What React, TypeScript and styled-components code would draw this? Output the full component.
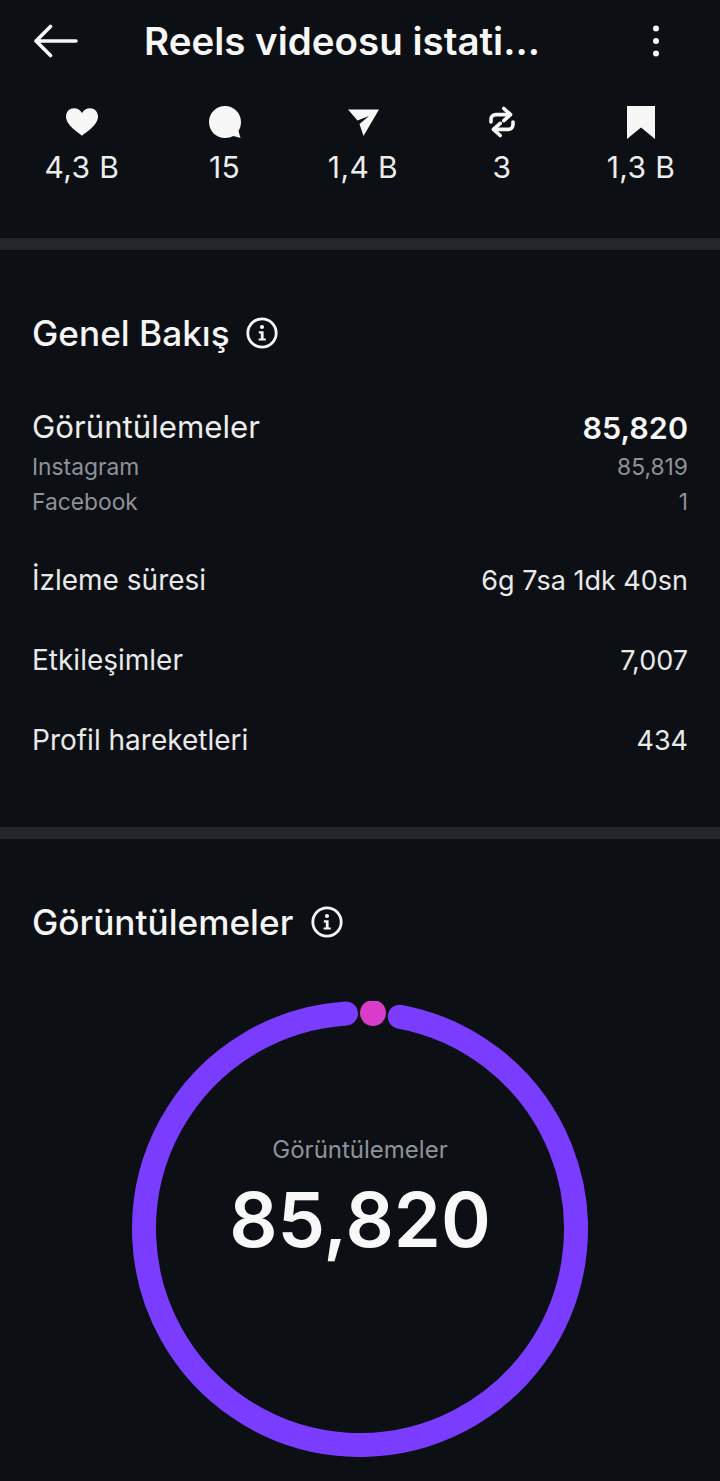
import React from 'react'
import styled, { createGlobalStyle } from 'styled-components'

const GlobalStyle = createGlobalStyle`
  html, body {
    margin: 0;
    padding: 0;
    background: #0c0f14;
  }
  * {
    box-sizing: border-box;
  }
`

const Page = styled.div`
  width: 720px;
  height: 1481px;
  overflow: hidden;
  background: #0c0f14;
  color: #f5f5f5;
  font-family: Inter, 'Noto Sans', sans-serif;
`

const Header = styled.div`
  height: 82px;
  padding: 0 57px 0 33px;
  display: flex;
  align-items: center;
`

const HeaderTitle = styled.div`
  margin-left: 65px;
  font-size: 38.5px;
  line-height: 44px;
  font-weight: 600;
  color: #f7f7f7;
  white-space: nowrap;
`

const HeaderMenu = styled.div`
  margin-left: auto;
  width: 14px;
  display: flex;
  justify-content: center;
`

const StatsRow = styled.div`
  height: 156px;
  padding: 23px 0 0 22px;
  display: grid;
  grid-template-columns: 120px 165px 112px 166px 112px;
`

const Stat = styled.div`
  display: flex;
  flex-direction: column;
  align-items: center;
  gap: 11px;
`

const StatIcon = styled.div`
  height: 34px;
  display: flex;
  align-items: center;
  justify-content: center;
`

const StatValue = styled.div`
  font-size: 30px;
  line-height: 34px;
  letter-spacing: 0.4px;
  color: #ececec;
  white-space: nowrap;
`

const Divider = styled.div`
  height: 12px;
  background: #23262b;
`

const Section = styled.div<{ $height: number }>`
  height: ${(p) => p.$height}px;
  padding: 0 32px;
`

const SectionTitle = styled.div<{ $gap: number }>`
  display: flex;
  align-items: center;
  gap: ${(p) => p.$gap}px;
  padding-top: 61px;
  font-size: 35.2px;
  line-height: 44px;
  font-weight: 550;
  color: #f5f5f5;
`

const Rows = styled.div`
  margin-top: 54px;
`

const MainRow = styled.div<{ $gap?: number }>`
  display: flex;
  justify-content: space-between;
  align-items: center;
  height: 36px;
  margin-top: ${(p) => p.$gap ?? 0}px;
  font-size: 28px;
  color: #e9e9e9;
`

const RowValue = styled.span`
  font-size: 27px;
`

const LeadRow = styled(MainRow)`
  font-size: 31.2px;
  color: #ececec;
`

const StrongValue = styled.span`
  font-weight: 600;
  font-size: 30.5px;
  color: #f5f5f5;
`

const SubRows = styled.div`
  margin-top: 4px;
`

const SubRow = styled.div`
  display: flex;
  justify-content: space-between;
  align-items: center;
  height: 35px;
  font-size: 22.8px;
  color: #8f9299;
`

const RingWrap = styled.div`
  position: relative;
  width: 456px;
  height: 456px;
  margin: 57px auto 0;
`

const RingLabel = styled.div`
  position: absolute;
  top: 134px;
  left: 0;
  right: 0;
  text-align: center;
  font-size: 24px;
  line-height: 30px;
  color: #8f9299;
`

const RingValue = styled.div`
  position: absolute;
  top: 173px;
  left: 0;
  right: 0;
  text-align: center;
  font-size: 75.6px;
  line-height: 92px;
  font-weight: 600;
  color: #f8f8f8;
`

const Icon = styled.svg`
  display: block;
  flex: none;
`

const info = (
  <Icon width="32" height="32" viewBox="0 0 32 32" fill="none">
    <circle cx="16" cy="16" r="14.2" stroke="#f5f5f5" strokeWidth="2.8" />
    <circle cx="16" cy="10" r="2.1" fill="#f5f5f5" />
    <path d="M12.8 14.2H17.6V21.4H19.8V23.6H12.6V21.4H14.8V16.4H12.8Z" fill="#f5f5f5" />
  </Icon>
)

const stats = [
  {
    value: '4,3 B',
    icon: (
      <Icon width="34" height="30" viewBox="0 0 34 30">
        <path d="M17 28.8C14.6 26.4 1 18.8 1 9.6C1 4.6 4.6 1.2 9 1.2C12.4 1.2 15.4 3 17 6C18.6 3 21.6 1.2 25 1.2C29.4 1.2 33 4.6 33 9.6C33 18.8 19.4 26.4 17 28.8Z" fill="#f7f7f7" />
      </Icon>
    ),
  },
  {
    value: '15',
    icon: (
      <Icon width="34" height="34" viewBox="0 0 34 34">
        <path d="M17 1C26 1 33 8 33 17C33 20.5 32 23.5 30.5 26L32.5 33L25.5 31C23 32.3 20 33 17 33C8 33 1 26 1 17C1 8 8 1 17 1Z" fill="#f7f7f7" />
      </Icon>
    ),
  },
  {
    value: '1,4 B',
    icon: (
      <Icon width="31" height="28" viewBox="0 0 31 28">
        <path d="M0 1.5L31 1.5L15.5 28L11.5 16L21 8L9.5 12.5Z" fill="#f7f7f7" />
      </Icon>
    ),
  },
  {
    value: '3',
    icon: (
      <Icon width="28" height="32" viewBox="0 0 28 32" fill="none">
        <path d="M3 16V13.5C3 10.5 5.2 8.6 8 8.6H21" stroke="#f7f7f7" strokeWidth="3.6" strokeLinecap="round" />
        <path d="M15.8 2.5L22.6 8.6L15.8 14.7" stroke="#f7f7f7" strokeWidth="3.6" strokeLinecap="round" strokeLinejoin="round" />
        <path d="M25 16V18.5C25 21.5 22.8 23.4 20 23.4H7" stroke="#f7f7f7" strokeWidth="3.6" strokeLinecap="round" />
        <path d="M12.2 17.3L5.4 23.4L12.2 29.5" stroke="#f7f7f7" strokeWidth="3.6" strokeLinecap="round" strokeLinejoin="round" />
      </Icon>
    ),
  },
  {
    value: '1,3 B',
    icon: (
      <Icon width="28" height="33" viewBox="0 0 28 33">
        <path d="M0 0H28V33L14 21.5L0 33Z" fill="#f7f7f7" />
      </Icon>
    ),
  },
]

export default function App() {
  const r = 216
  const c = 228
  const gapRad = 27 / r
  const rot = 13 / r
  const a0 = rot + gapRad
  const a1 = rot - gapRad + Math.PI * 2
  const pt = (a: number) => `${(c + r * Math.sin(a)).toFixed(2)} ${(c - r * Math.cos(a)).toFixed(2)}`

  return (
    <Page>
      <GlobalStyle />
      <Header>
        <Icon width="46" height="34" viewBox="0 0 46 34" fill="none">
          <path d="M43 17H3M17.5 2.5L3 17L17.5 31.5" stroke="#f7f7f7" strokeWidth="3.6" strokeLinecap="round" strokeLinejoin="round" />
        </Icon>
        <HeaderTitle>Reels videosu istati...</HeaderTitle>
        <HeaderMenu>
          <Icon width="14" height="32" viewBox="0 0 14 32">
            <circle cx="7" cy="3.5" r="3" fill="#f7f7f7" />
            <circle cx="7" cy="16" r="3" fill="#f7f7f7" />
            <circle cx="7" cy="28.5" r="3" fill="#f7f7f7" />
          </Icon>
        </HeaderMenu>
      </Header>
      <StatsRow>
        {stats.map((s) => (
          <Stat key={s.value}>
            <StatIcon>{s.icon}</StatIcon>
            <StatValue>{s.value}</StatValue>
          </Stat>
        ))}
      </StatsRow>
      <Divider />
      <Section $height={577}>
        <SectionTitle $gap={16}>
          Genel Bakış
          {info}
        </SectionTitle>
        <Rows>
          <LeadRow>
            <span>Görüntülemeler</span>
            <StrongValue>85,820</StrongValue>
          </LeadRow>
          <SubRows>
            <SubRow>
              <span>Instagram</span>
              <span>85,819</span>
            </SubRow>
            <SubRow>
              <span>Facebook</span>
              <span>1</span>
            </SubRow>
          </SubRows>
          <MainRow $gap={43}>
            <span>İzleme süresi</span>
            <RowValue>6g 7sa 1dk 40sn</RowValue>
          </MainRow>
          <MainRow $gap={44}>
            <span>Etkileşimler</span>
            <RowValue>7,007</RowValue>
          </MainRow>
          <MainRow $gap={44}>
            <span>Profil hareketleri</span>
            <RowValue>434</RowValue>
          </MainRow>
        </Rows>
      </Section>
      <Divider />
      <Section $height={642}>
        <SectionTitle $gap={18}>
          Görüntülemeler
          {info}
        </SectionTitle>
        <RingWrap>
          <Icon width="456" height="456" viewBox="0 0 456 456" fill="none">
            <path
              d={`M${pt(a0)} A${r} ${r} 0 1 1 ${pt(a1)}`}
              stroke="#7a3cff"
              strokeWidth="24"
              strokeLinecap="round"
            />
            <circle cx="241" cy="12" r="13" fill="#d93cc8" />
          </Icon>
          <RingLabel>Görüntülemeler</RingLabel>
          <RingValue>85,820</RingValue>
        </RingWrap>
      </Section>
    </Page>
  )
}
